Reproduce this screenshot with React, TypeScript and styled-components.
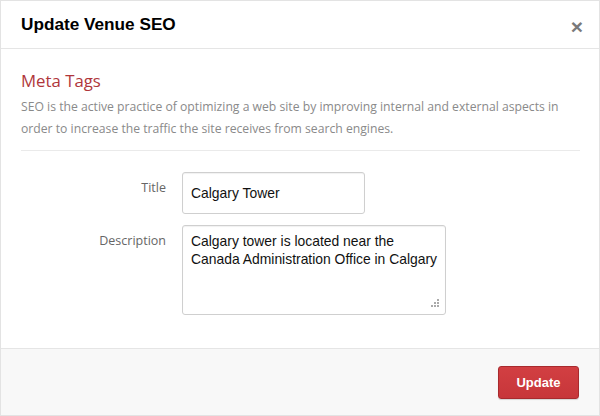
import React from "react";
import styled, { createGlobalStyle } from "styled-components";

const Global = createGlobalStyle`
  html, body { margin: 0; padding: 0; background: #fff; }
  * { box-sizing: border-box; }
`;

const Modal = styled.div`
  width: 600px;
  height: 416px;
  border: 1px solid #e3e3e3;
  display: flex;
  flex-direction: column;
  background: #fff;
  font-family: "Open Sans", sans-serif;
`;

const Header = styled.div`
  height: 48px;
  flex: none;
  border-bottom: 1px solid #e5e5e5;
  display: flex;
  align-items: center;
  justify-content: space-between;
  padding: 0 16px 0 20px;
`;

const Title = styled.h3`
  margin: 0;
  font-family: "Liberation Sans", Arial, sans-serif;
  font-weight: bold;
  font-size: 17.2px;
  color: #000;
  margin-top: -1px;
`;

const Close = styled.button`
  border: none;
  background: none;
  padding: 0;
  margin-top: 4px;
  font-family: "Liberation Sans", Arial, sans-serif;
  font-weight: bold;
  font-size: 21px;
  line-height: 1;
  color: #7a7a7a;
  cursor: pointer;
`;

const Body = styled.div`
  flex: 1;
  padding: 20px 19px 0 20px;
`;

const SectionTitle = styled.h4`
  margin: 0;
  font-weight: normal;
  font-size: 16.8px;
  line-height: 24px;
  color: #b0363b;
`;

const Lead = styled.p`
  margin: 3px 0 0;
  font-size: 12.2px;
  line-height: 22px;
  color: #8a8a8a;
`;

const Divider = styled.hr`
  border: none;
  border-top: 1px solid #eaeaea;
  margin: 10px 0 21px;
`;

const Row = styled.div`
  display: flex;
  gap: 16px;
  margin-bottom: 11px;
`;

const Label = styled.label<{ pt: number }>`
  width: 145px;
  flex: none;
  text-align: right;
  font-size: 12.5px;
  color: #666;
  padding-top: ${(p) => p.pt}px;
`;

const fieldText = `
  font-family: "Liberation Sans", Arial, sans-serif;
  font-size: 13.9px;
  color: #111;
  border: 1px solid #cfcfcf;
  border-radius: 3px;
  background: #fff;
  box-shadow: inset 0 1px 1px rgba(0,0,0,0.06);
  outline: none;
`;

const Input = styled.input`
  ${fieldText}
  width: 183px;
  height: 42px;
  padding: 0 8px;
`;

const AreaWrap = styled.div`
  position: relative;
  width: 264px;
  height: 90px;
`;

const TextArea = styled.textarea`
  ${fieldText}
  width: 100%;
  height: 100%;
  padding: 6px 2px 6px 8px;
  line-height: 18px;
  white-space: pre;
  overflow: hidden;
  resize: none;
`;

const Grip = styled.svg`
  position: absolute;
  right: 7px;
  bottom: 6px;
`;

const Footer = styled.div`
  height: 67px;
  flex: none;
  border-top: 1px solid #e5e5e5;
  background: #f8f8f8;
  display: flex;
  align-items: center;
  justify-content: flex-end;
  padding: 0 20px;
`;

const Button = styled.button`
  width: 81px;
  height: 33px;
  border: 1px solid #a82a2e;
  border-radius: 3px;
  background: linear-gradient(#d23f42, #c7363a);
  box-shadow: 0 1px 1px rgba(0,0,0,0.15);
  color: #fff;
  font-family: "Liberation Sans", Arial, sans-serif;
  font-weight: bold;
  font-size: 13px;
  cursor: pointer;
`;

export default function App() {
  return (
    <>
      <Global />
      <Modal>
        <Header>
          <Title>Update Venue SEO</Title>
          <Close aria-label="Close">×</Close>
        </Header>
        <Body>
          <SectionTitle>Meta Tags</SectionTitle>
          <Lead>
            SEO is the active practice of optimizing a web site by improving internal and external aspects in
            order to increase the traffic the site receives from search engines.
          </Lead>
          <Divider />
          <Row>
            <Label pt={7}>Title</Label>
            <Input defaultValue="Calgary Tower" />
          </Row>
          <Row>
            <Label pt={7}>Description</Label>
            <AreaWrap>
              <TextArea defaultValue={"Calgary tower is located near the\nCanada Administration Office in Calgary"} />
              <Grip width="10" height="10" viewBox="0 0 10 10">
                {[
                  [8, 0],
                  [5, 3],
                  [8, 3],
                  [2, 6],
                  [5, 6],
                  [8, 6],
                ].map(([x, y], i) => (
                  <rect key={i} x={x} y={y} width="2" height="2" fill="#aaa" />
                ))}
              </Grip>
            </AreaWrap>
          </Row>
        </Body>
        <Footer>
          <Button>Update</Button>
        </Footer>
      </Modal>
    </>
  );
}
